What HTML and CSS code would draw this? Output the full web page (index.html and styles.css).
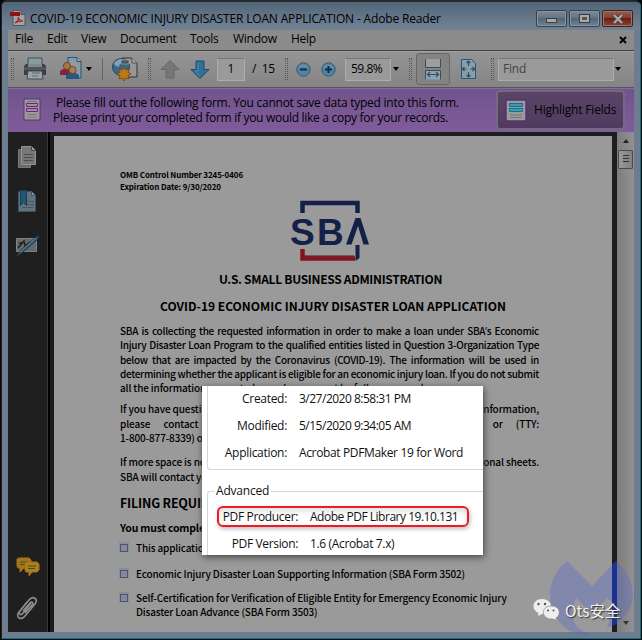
FILE: index.html
```html
<!DOCTYPE html>
<html lang="en">
<head>
<meta charset="utf-8">
<title>COVID-19 ECONOMIC INJURY DISASTER LOAN APPLICATION - Adobe Reader</title>
<link rel="stylesheet" href="styles.css">
</head>
<body>
<div class="window">
  <header class="titlebar">
    <svg class="app-icon" width="16" height="16" viewBox="0 0 16 16"><path d="M3 .5h8l4 4v11H3z" fill="#a3a3a3" stroke="#555"/><path d="M11 .5v4h4" fill="#777" stroke="#555"/><path d="M0 2h10v4H0z" fill="#8b1216"/><path d="M5 13c3-2 4-4 3-6 1 3 3 4 5 4-3 0-5 0-8 2" fill="none" stroke="#9c2422" stroke-width="1.1"/></svg>
    <span class="title">COVID-19 ECONOMIC INJURY DISASTER LOAN APPLICATION - Adobe Reader</span>
    <div class="controls">
      <span class="ctl"><i class="min"></i></span>
      <span class="ctl"><i class="max"></i></span>
      <span class="ctl close"><svg width="12" height="10" viewBox="0 0 12 10"><path d="M2 1l8 8M10 1L2 9" stroke="#444" stroke-width="4"/><path d="M2 1l8 8M10 1L2 9" stroke="#aaa" stroke-width="2.2"/></svg></span>
    </div>
  </header>
  <nav class="menu">
    <span>File</span><span>Edit</span><span>View</span><span>Document</span><span>Tools</span><span>Window</span><span>Help</span>
    <svg class="menu-x" width="8" height="8" viewBox="0 0 8 8"><path d="M1 1l6 6M7 1L1 7" stroke="#000" stroke-width="2"/></svg>
  </nav>
  <div class="toolbar">
    <i class="grip"></i>
    <svg width="24" height="24" viewBox="0 0 24 24"><path d="M5 1h14v9H5z" fill="#8d9a9c" stroke="#29566b"/><path d="M1 9l2-2h18l2 2v9H1z" fill="#3a3c3e"/><path d="M1 10h22v3H1z" fill="#555"/><path d="M5 7h14v3H5z" fill="#7e8a8e"/><path d="M5 14h14l1 8H4z" fill="#a2a2a2" stroke="#29566b"/><path d="M9 16h8M9 19h6" stroke="#666"/></svg>
    <svg width="24" height="24" viewBox="0 0 24 24"><path d="M8 .5h9l4 4V21H8z" fill="#8c9ba5" stroke="#1f567b"/><path d="M17 .5v4h4" fill="#a8b0b5" stroke="#1f567b"/><path d="M0 18v-4l3-2h6l3 3v3z" fill="#84213f"/><circle cx="7" cy="9" r="3.6" fill="#aa7545" stroke="#6f4422"/><path d="M6 22v-4l3-2h7l3 2v4z" fill="#245a80"/><circle cx="12.500" cy="13" r="3.600" fill="#b17c4b" stroke="#704420"/></svg>
    <i class="caret"></i>
    <i class="divider"></i>
    <svg width="28" height="26" viewBox="0 0 28 26"><path d="M11 2h10l5 5v14H11z" fill="#969696" stroke="#333"/><path d="M21 2v5h5" fill="#aaa" stroke="#555"/><circle cx="10" cy="11" r="8.500" fill="#3c6687" stroke="#254967"/><path d="M3 7c4-4 7-5 10-3-2 4-5 3-5 7-3-1-5-2-5-4z" fill="#83a2b8"/><path d="M10 4h8v4h-8z" fill="#4c555c" stroke="#b2b2b2" stroke-width=".6"/><path d="M13 11l1.700 3 3.300-1-1 3.300 3 1.700-3 1.700 1 3.300-3.300-1-1.700 3-1.700-3-3.300 1 1-3.300-3-1.700 3-1.700-1-3.300 3.300 1z" fill="#b77a1c" stroke="#80500d"/></svg>
    <i class="grip"></i>
    <svg width="20" height="21" viewBox="0 0 20 21"><path d="M10 1.500l9 9h-5V19H6v-8.500H1z" fill="#777" stroke="#666"/></svg>
    <svg width="20" height="21" viewBox="0 0 20 21"><path d="M10 19.500l9-9h-5V2H6v8.500H1z" fill="#326f99" stroke="#174d72"/><path d="M8 4v8H5l5 5" fill="none" stroke="#4f87aa"/></svg>
    <span class="field page-no">1</span>
    <span class="of">/&nbsp; 15</span>
    <i class="grip"></i>
    <svg width="15" height="15" viewBox="0 0 15 15"><circle cx="7.500" cy="7.500" r="6.700" fill="#5582a0" stroke="#375b75"/><path d="M3 6q4-5 9 0" fill="none" stroke="#7d9eb3"/><path d="M4 7.500h7" stroke="#0b304c" stroke-width="2"/></svg>
    <svg width="15" height="15" viewBox="0 0 15 15"><circle cx="7.500" cy="7.500" r="6.700" fill="#5582a0" stroke="#375b75"/><path d="M3 6q4-5 9 0" fill="none" stroke="#7d9eb3"/><path d="M4 7.500h7M7.500 4v7" stroke="#0b304c" stroke-width="2"/></svg>
    <span class="field zoom">59.8%</span>
    <i class="caret"></i>
    <i class="grip"></i>
    <span class="pressed"><svg width="16" height="21" viewBox="0 0 16 21"><path d="M.5 0v8.500h15V0" fill="#9c9fa1" stroke="#3a4e5b"/><path d="M.5 20.500v-9h15v9" fill="#96a0a8" stroke="#3a4e5b"/><path d="M2.500 15.500h11M5 13l-2.500 2.500L5 18M11 13l2.500 2.500L11 18" stroke="#1d5578" fill="none" stroke-width="1.200"/></svg></span>
    <svg class="fit" width="18" height="22" viewBox="0 0 18 22"><path d="M2.500 1.500h10l4 4v15h-14z" fill="#8f9ba5" stroke="#1f567b"/><path d="M9.500 3v5M9.500 14v5M3.500 11h4M11.500 11h4M7.500 5l2-2 2 2M7.500 17l2 2 2-2M5.500 9l-2 2 2 2M13.500 9l2 2-2 2" fill="none" stroke="#1c5478" stroke-width="1.200"/></svg>
    <i class="grip"></i>
    <span class="field find">Find</span>
    <i class="caret"></i>
  </div>
  <div class="notice">
    <svg class="form-icon" width="18" height="23" viewBox="0 0 18 23"><path d="M1 1h16v21H1z" fill="#9b9b9b" stroke="#5a3575"/><path d="M3.500 5.500h11v3h-11zM3.500 10.500h11v3h-11z" fill="#a687b2" stroke="#642b7b"/><path d="M4 3.500h10M4 16.500h10M4 19h10" stroke="#777"/></svg>
    <div class="message"><p class="m1">Please fill out the following form. You cannot save data typed into this form.</p><p class="m2">Please print your completed form if you would like a copy for your records.</p></div>
    <div class="highlight"><svg width="22" height="23" viewBox="0 0 22 23"><path d="M1 1h20v21H1z" fill="#9b9b9b" stroke="#593174" stroke-width="1.500"/><path d="M4.500 4.500h13v3h-13zM4.500 9.500h13v3h-13z" fill="#4398b4" stroke="#10708e"/><path d="M5 16h12M5 18.500h12" stroke="#777"/></svg><span>Highlight Fields</span></div>
  </div>
  <main class="body">
    <aside class="sidebar">
      <div class="top-tools">
        <svg width="24" height="24" viewBox="0 0 24 24"><path d="M2.500 3.500h12v18h-12z" fill="#696969" stroke="#777"/><path d="M5.500.500h10l4 4v14h-14z" fill="#777" stroke="#929292"/><path d="M15.500.500v4h4" fill="#999" stroke="#444"/><path d="M8 8.500h9M8 11.500h9M8 14.500h9" stroke="#4c4c4c"/></svg>
        <svg width="24" height="24" viewBox="0 0 24 24"><path d="M2.500 1.500h13l4 4v16h-17z" fill="#66727b" stroke="#35566c"/><path d="M15.500 1.500v4h4" fill="#8d9aa2" stroke="#35566c"/><path d="M11 11.500h7M11 14.500h7M6 17.500h12" stroke="#485762"/><path d="M4.500.500h6v15l-3-3-3 3z" fill="#265675" stroke="#153e58"/></svg>
        <svg width="24" height="24" viewBox="0 0 24 24"><path d="M.500 4.500h20v13H.500z" fill="#696969" stroke="#828282"/><path d="M2 14l6-7 1 5 5-4M3 9h4" fill="none" stroke="#202020" stroke-width="1.500"/><path d="M1 22L5 16 20 3l3-1-2 4L7 18z" fill="#315b78" stroke="#263b4b"/><path d="M4 18L20 4" stroke="#6389a2"/></svg>
      </div>
      <div class="low-tools">
        <svg width="24" height="20" viewBox="0 0 24 20"><path d="M1 2l2-1h10l2 2v6l-2 2H8l-4 4v-4H2L1 9z" fill="#9a7720" stroke="#b66d0c"/><path d="M4 5h8M4 7.500h5" stroke="#604607"/><path d="M9 6l2-1h10l2 2v6l-2 2h-5l-3 4v-4h-3l-1-2z" fill="#a28423" stroke="#b66d0c"/><path d="M12 9h8M12 11.500h7" stroke="#604607"/></svg>
        <svg width="22" height="24" viewBox="0 0 22 24"><path d="M15 7L7 17c-2 3-5 1-3-2L13 4c4-5 10-1 6 4L9 20c-4 5-10 1-6-4l8-10M7 15l7-8c2-2 4 0 2 2l-7 8" fill="none" stroke="#8d8d8d" stroke-width="1.600"/></svg>
      </div>
    </aside>
    <article class="page">
      <div class="omb"><p class="o1">OMB Control Number 3245-0406</p><p class="o2">Expiration Date: 9/30/2020</p></div>
      <svg class="sba" width="80" height="62" viewBox="0 0 80 62"><path d="M11.500 13V3h55v10" fill="none" stroke="#142047" stroke-width="4.500"/><path d="M11.500 49v9.500H64" fill="none" stroke="#85141c" stroke-width="4.500"/><path d="M11 56h52" stroke="#481923"/><path d="M64.500 61v-5V45h4v13z" fill="#142047"/><text x="-1" y="44.500" class="logo-s">S</text><text x="26" y="44.500" class="logo-s">B</text><path d="M55 44.500L64.500 18h5l8.500 26.500h-5.500L67 26 60.500 44.500z" fill="#142047"/></svg>
      <h1 class="h-admin">U.S. SMALL BUSINESS ADMINISTRATION</h1>
      <h1 class="h-form">COVID-19 ECONOMIC INJURY DISASTER LOAN APPLICATION</h1>
      <div class="para">
        <p>SBA is collecting the requested information in order to make a loan under SBA<span class="apos">’</span>s Economic</p>
        <p>Injury Disaster Loan Program to the qualified entities listed in Question 3-Organization Type</p>
        <p>below that are impacted by the Coronavirus (COVID-19). The information will be used in</p>
        <p>determining whether the applicant is eligible for an economic injury loan. If you do not submit</p>
        <p class="left">all the information requested, your loan cannot be fully processed.</p>
      </div>
      <div class="para second">
        <p class="split"><span>If you have questions</span><span>information,</span></p>
        <p class="split wide"><span>please contact</span><span>or (TTY:</span></p>
        <p class="left">1-800-877-8339) or</p>
      </div>
      <div class="para third">
        <p class="split"><span>If more space is needed</span><span>additional sheets.</span></p>
        <p class="left">SBA will contact you</p>
      </div>
      <h2>FILING REQUIREMENTS</h2>
      <p class="must">You must complete</p>
      <div class="item"><i class="box"></i><p>This application</p></div>
      <div class="item i2"><i class="box"></i><p>Economic Injury Disaster Loan Supporting Information (SBA Form 3502)</p></div>
      <div class="item i3"><i class="box"></i><p>Self-Certification for Verification of Eligible Entity for Emergency Economic Injury<br>Disaster Loan Advance (SBA Form 3503)</p></div>
    </article>
    <div class="scroll"><i class="up"></i><i class="thumb"></i><i class="down"></i></div>
  </main>
</div>
<section class="popup">
  <div class="group first">
    <b>Created:</b><span class="v1">3/27/2020 8:58:31 PM</span>
    <b>Modified:</b><span class="v2">5/15/2020 9:34:05 AM</span>
    <b>Application:</b><span class="v3">Acrobat PDFMaker 19 for Word</span>
  </div>
  <fieldset class="group">
    <legend>Advanced</legend>
    <div class="producer"><b>PDF Producer:</b><span>Adobe PDF Library 19.10.131</span></div>
    <div class="version"><b>PDF Version:</b><span>1.6 (Acrobat 7.x)</span></div>
  </fieldset>
</section>
<div class="watermark">
  <svg class="emblem" width="84" height="76" viewBox="0 0 84 76"><path d="M17 0L42 25 66 0C91 22 88 55 57 67L64 42 57 37 42 53 26 37C18 55 24 70 42 74 16 77 0 55 0 34 0 20 7 7 17 0Z" fill="#4a5fd8" fill-opacity=".3"/><path d="M62 4l4-4 1 1v62l-5 2z" fill="#1735a0" fill-opacity=".8"/></svg>
  <div class="signature">
    <svg width="26" height="22" viewBox="0 0 26 22"><path d="M9 0c12 0 12 15 0 15l-4 2 .5-3C-3 10 0 0 9 0z" fill="#eee"/><path d="M18 7c10 0 10 9 5 12l.5 2.500L20 20C8 21 7 7 18 7z" fill="#eee" stroke="#888" stroke-width=".7"/><g fill="#555"><circle cx="5.500" cy="5" r="1.200"/><circle cx="12" cy="5" r="1.200"/><circle cx="15" cy="11.500" r="1"/><circle cx="20.500" cy="11.500" r="1"/></g></svg>
    <span>Ots安全</span>
  </div>
</div>
</body>
</html>
```
FILE: styles.css
```css
* { box-sizing: border-box; }
body { margin: 0; width: 642px; height: 640px; overflow: hidden; position: relative; background: #080808; font: 12px/16px "Open Sans", "Noto Sans", sans-serif; color: #000; }
p, h1, h2 { margin: 0; white-space: nowrap; }
svg { display: block; }
i { display: block; }
.window { margin: 0 1px; height: 639px; border: 1px solid #202428; border-top: 2px solid #262b2f; border-right-color: #087184; border-bottom-color: #087184; border-radius: 6px 6px 0 0; background: #6d7d8f; padding: 0 6px; overflow: hidden; }
.titlebar { height: 28px; margin: 0 -6px; padding: 0 7px 0 8px; display: flex; background: linear-gradient(#526578, #697b8d 70%, #718293); }
.app-icon { margin-top: 8px; }
.title { margin: 9px 0 0 4px; white-space: nowrap; letter-spacing: -.165px; }
.controls { margin: 8px 0 0 auto; display: flex; gap: 2px; }
.ctl { width: 31px; height: 17px; border: 1px solid #33414e; border-radius: 2px; box-shadow: inset 0 0 0 1px #8996a2; background: linear-gradient(#7b8996, #637483 48%, #536574 50%, #728291); display: flex; align-items: center; justify-content: center; }
.min { width: 11px; height: 5px; margin-top: 4px; background: #aaa; border: 1px solid #383f46; }
.max { width: 11px; height: 9px; border: 1px solid #333b44; background: #555 content-box; box-shadow: inset 0 0 0 2px #aaa; }
.close { background: linear-gradient(#965b50, #833d31 48%, #6c1d12 50%, #8e4235); border-color: #3d211f; box-shadow: inset 0 0 0 1px #9a7770; }
.menu { height: 20px; background: #8b8b8b; display: grid; grid-template-columns: 32px 34px 39px 70px 43px 58px 1fr 12px; padding: 1px 3px 0 7px; letter-spacing: -.25px; }
.menu-x { margin-top: 5px; }
.toolbar { height: 38px; border-top: 1px solid #414141; border-bottom: 1px solid #555; box-shadow: inset 0 1px #a1a1a1; background: linear-gradient(#959595, #858585); padding-left: 3px; display: grid; grid-template-columns: 12px 37px 26px 16px 9px 37px 12px 30px 27px 35px 33px 11px 25px 24px 48px 16px 7px 43px 32px 7px 117px 18px; align-items: center; }
.grip { width: 3px; height: 22px; border: 1px dotted #585858; border-width: 0 1px; }
.caret { width: 0; border: 3px solid transparent; border-top: 4px solid #000; border-bottom: 0; }
.divider { width: 1px; height: 22px; background: #656565; }
.field { height: 23px; background: #9a9a9a; border: 1px solid #acacac; border-top-color: #777; line-height: 20px; }
.page-no { width: 28px; text-align: center; }
.of { letter-spacing: -.3px; }
.zoom { width: 46px; padding-left: 5px; letter-spacing: -.5px; }
.find { width: 116px; padding-left: 4px; color: #444; letter-spacing: -.2px; }
.pressed { width: 34px; height: 32px; border: 1px solid #666; border-radius: 3px; background: #838383; display: flex; align-items: center; justify-content: center; }
.notice { height: 44px; background: linear-gradient(#70548b, #805b9b); display: grid; grid-template-columns: 45px 443px 1fr; box-shadow: inset 0 1px #8b67a4; }
.form-icon { margin: 10px 0 0 15px; }
.message { padding-top: 7px; line-height: 15px; }
.m1 { padding-left: 3px; letter-spacing: -.255px; }
.m2 { letter-spacing: -.295px; }
.highlight { width: 129px; height: 40px; margin-top: 2px; border: 2px solid #756980; border-radius: 4px; background: linear-gradient(#5a4568, #503a61); display: flex; align-items: center; gap: 7px; padding-left: 7px; white-space: nowrap; letter-spacing: -.18px; }
.body { height: 500px; display: grid; grid-template-columns: 46px 558px 5px 17px; background: #1d1d1d; }
.sidebar { width: 42px; border-right: 2px solid #020202; box-shadow: inset -1px 0 #3a3a3a; background: #1f1f1f; display: flex; flex-direction: column; justify-content: space-between; padding: 14px 0 12px 8px; }
.top-tools { display: grid; gap: 20px; }
.low-tools { display: grid; gap: 19px; }
.page { margin-top: 4px; background: #9a9a9a; padding: 33px 0 0 66px; font-family: "Noto Sans CJK SC", "Open Sans", sans-serif; font-weight: 500; font-size: 10px; overflow: hidden; }
.omb { font-size: 8px; line-height: 12px; font-weight: 700; letter-spacing: -.12px; }
.sba { margin: 7px 0 0 171px; }
.logo-s { font: 700 37px "Liberation Sans", sans-serif; fill: #142047; }
h1 { font-size: 12px; line-height: 16px; font-weight: 700; }
.h-admin { margin: 9px 0 0 99px; letter-spacing: -.31px; }
.h-form { margin: 11px 0 0 40px; }
.para { width: 419px; margin-top: 10px; line-height: 14.3px; letter-spacing: -.3px; }
.para p { text-align-last: justify; }
.para p.left { text-align-last: left; letter-spacing: -.15px; }
.apos { font-family: "Open Sans", sans-serif; }
.para.second { margin-top: 7px; letter-spacing: -.12px; }
.para.third { margin-top: 10px; letter-spacing: -.12px; }
.split { display: flex; justify-content: space-between; }
.wide { word-spacing: 11px; }
h2 { font-size: 12.5px; line-height: 16px; margin-top: 11px; letter-spacing: -.2px; }
.must { font-size: 10.5px; font-weight: 700; line-height: 14px; margin-top: 10px; letter-spacing: -.2px; }
.item { display: flex; gap: 8px; line-height: 14px; margin-top: 6px; letter-spacing: -.165px; }
.i2 { margin-top: 12px; }
.i3 { margin-top: 10px; }
.box { width: 8px; height: 8px; margin-top: 3px; border: 1px solid #4e5369; background: #8588a0; box-shadow: 0 -1px 0 1px #888c9f; }
.scroll { grid-column: 4; background: linear-gradient(90deg, #7d7d7d, #929292); display: flex; flex-direction: column; align-items: center; padding: 7px 1px 7px; }
.up { border: 3px solid transparent; border-bottom: 4px solid #222; border-top: 0; }
.thumb { width: 15px; height: 19px; margin-top: 7px; border: 1px solid #4b4b4b; border-radius: 1px; background: repeating-linear-gradient(#333 0 1px, #888 1px 3px) 4px 4px / 6px 9px no-repeat, linear-gradient(90deg, #999, #818181); }
.down { margin-top: auto; border: 3px solid transparent; border-top: 4px solid #333; border-bottom: 0; }
.popup { position: absolute; left: 202px; top: 386px; width: 281px; height: 169px; overflow: hidden; background: #fff; color: #111; padding-left: 5px; box-shadow: 1px 2px 7px #444; }
.popup b { font-weight: 400; text-align: right; }
.group { border: 1px solid #d0d7df; border-right: 0; margin: 0; padding: 0; }
.first { height: 84px; border-top: 0; border-bottom-left-radius: 3px; display: grid; grid-template-columns: 79px 1fr; column-gap: 12px; grid-auto-rows: 27px; line-height: 26px; letter-spacing: -.3px; white-space: nowrap; }
.v1, .v2 { letter-spacing: -.5px; }
.v3 { letter-spacing: -.36px; }
fieldset.group { height: 80px; margin-top: 13px; border-top-left-radius: 3px; border-bottom: 0; }
legend { padding: 0 2px; margin-left: 6px; line-height: 16px; letter-spacing: -.2px; }
.producer { width: 252px; height: 21px; margin: 7px 0 0 9px; border: 2px solid #ec1b24; border-radius: 6px; box-shadow: 1px 2px 4px #bbb, inset 0 3px 6px #ddd; display: grid; grid-template-columns: 79px 1fr; column-gap: 12px; line-height: 17px; letter-spacing: -.35px; white-space: nowrap; }
.producer span { letter-spacing: -.48px; }
.version { display: grid; grid-template-columns: 90px 1fr; column-gap: 12px; line-height: 17px; margin-top: 8px; letter-spacing: -.35px; }
.watermark { position: absolute; left: 532px; top: 561px; width: 102px; height: 76px; }
.emblem { position: absolute; left: 18px; top: 0; }
.signature { position: absolute; left: 1px; top: 37px; display: flex; gap: 6px; align-items: center; color: #f2f2f2; font: 15.500px/24px "Noto Sans CJK SC", sans-serif; text-shadow: 1px 1px 1px #333; white-space: nowrap; }
```
